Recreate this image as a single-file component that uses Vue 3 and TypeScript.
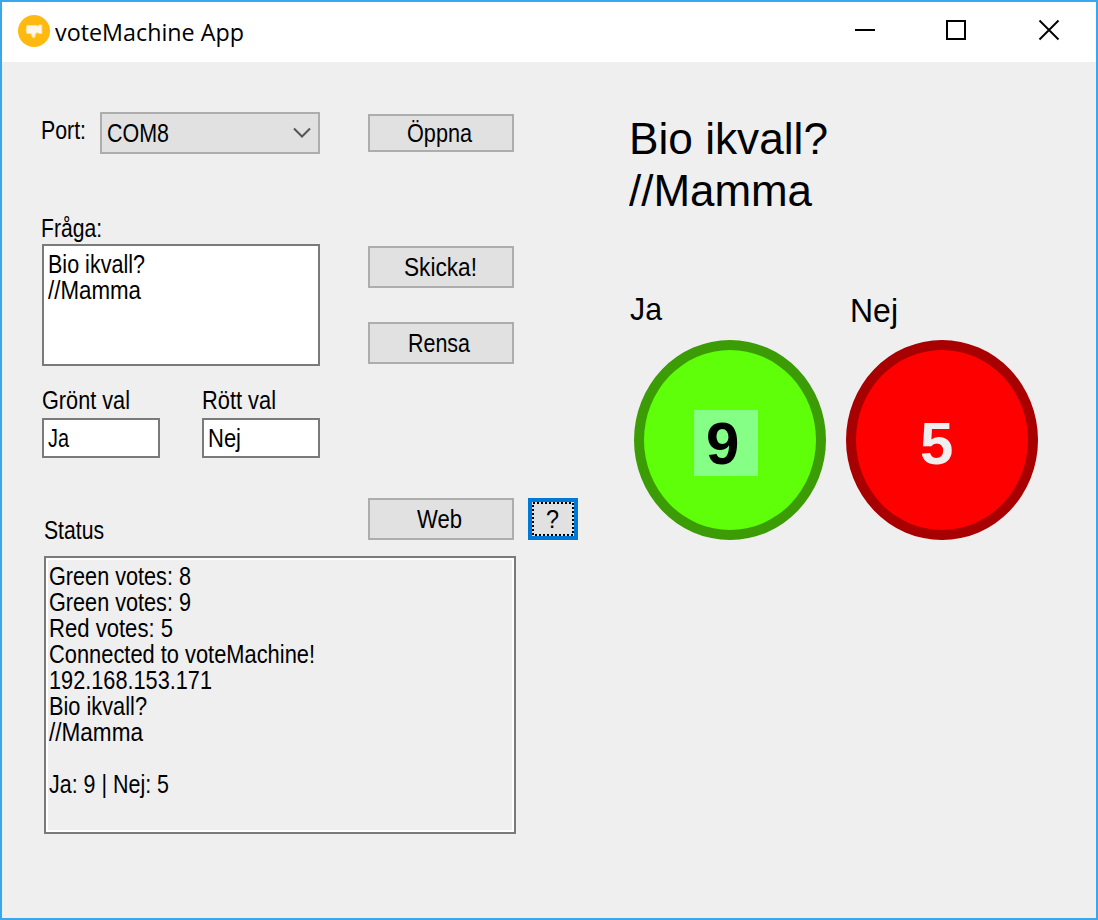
<script setup lang="ts">
interface StatusLine { text: string; width: number }

const status: StatusLine[] = [
  { text: 'Green votes: 8', width: 142 },
  { text: 'Green votes: 9', width: 142 },
  { text: 'Red votes: 5', width: 124 },
  { text: 'Connected to voteMachine!', width: 266 },
  { text: '192.168.153.171', width: 163 },
  { text: 'Bio ikvall?', width: 98 },
  { text: '//Mamma', width: 94 },
  { text: '', width: 0 },
  { text: 'Ja: 9 | Nej: 5', width: 120 },
]

// Condenses or stretches a label horizontally to a given width.
const vFit = {
  mounted(el: HTMLElement, binding: { value: number }) {
    const natural = el.getBoundingClientRect().width
    if (natural > 0) {
      el.style.transform = `scaleX(${binding.value / natural})`
      el.style.marginRight = `${binding.value - natural}px`
    }
  },
}
</script>

<template>
  <div class="window">
    <header class="titlebar">
      <svg class="app-icon" width="32" height="32" viewBox="0 0 32 32">
        <circle cx="16" cy="16" r="16" fill="#ffb90f" />
        <path d="M9 10.500h9.500l1.500 1 .8-1.500h3v8.500h-3l-.8-1-2.500.8-.8 4h-2.200l-1.500-3.800h-4l-.8-3z" fill="#fff8ea" stroke="#ffe3a6" stroke-width="1" stroke-linejoin="round" />
      </svg>
      <h1 class="app-title"><span v-fit="189" class="fit">voteMachine App</span></h1>
      <svg class="controls" width="206" height="24" viewBox="0 0 206 24" fill="none" stroke="#000" stroke-width="2">
        <path d="M1 12h20" />
        <rect x="93" y="3" width="18" height="18" />
        <path d="M185.500 2.500l19 19M204.500 2.500l-19 19" stroke-width="1.900" />
      </svg>
    </header>

    <main class="form">
      <section class="left">
        <div class="row port-row">
          <label class="port-label"><span v-fit="45" class="fit">Port:</span></label>
          <div class="combo">
            <span v-fit="62" class="fit">COM8</span>
            <svg width="18" height="12" viewBox="0 0 18 12" fill="none" stroke="#555" stroke-width="2"><path d="M1 1.500l8 8 8-8" /></svg>
          </div>
          <button class="btn short"><span v-fit="65" class="fit">Öppna</span></button>
        </div>

        <div class="row question-row">
          <div class="question">
            <label><span v-fit="61" class="fit">Fråga:</span></label>
            <div class="textarea">
              <div><span v-fit="97" class="fit">Bio ikvall?</span></div>
              <div><span v-fit="93" class="fit">//Mamma</span></div>
            </div>
          </div>
          <div class="actions">
            <button class="btn wide"><span v-fit="73" class="fit">Skicka!</span></button>
            <button class="btn"><span v-fit="62" class="fit">Rensa</span></button>
          </div>
        </div>

        <div class="row choices">
          <div class="choice">
            <label><span v-fit="88" class="fit">Grönt val</span></label>
            <div class="input"><span v-fit="21" class="fit">Ja</span></div>
          </div>
          <div class="choice">
            <label><span v-fit="74" class="fit">Rött val</span></label>
            <div class="input"><span v-fit="33" class="fit">Nej</span></div>
          </div>
        </div>

        <div class="row status-row">
          <label class="status-label"><span v-fit="60" class="fit">Status</span></label>
          <button class="btn"><span v-fit="45" class="fit">Web</span></button>
          <button class="btn help">
            <svg width="42" height="34" viewBox="0 0 42 34"><rect x="1" y="1" width="40" height="32" fill="none" stroke="#000" stroke-width="2" stroke-dasharray="2 2" shape-rendering="crispEdges" /></svg>
            <span v-fit="13" class="fit">?</span>
          </button>
        </div>

        <div class="status">
          <div v-for="(line, i) in status" :key="i" class="line"><span v-if="line.text" v-fit="line.width" class="fit">{{ line.text }}</span></div>
        </div>
      </section>

      <section class="right">
        <div class="headline">
          <div><span v-fit="199" class="fit">Bio ikvall?</span></div>
          <div><span v-fit="183" class="fit">//Mamma</span></div>
        </div>
        <div class="votes">
          <div class="vote">
            <div class="name"><span v-fit="32" class="fit">Ja</span></div>
            <div class="disc green"><span class="count">9</span></div>
          </div>
          <div class="vote">
            <div class="name nej"><span v-fit="48" class="fit">Nej</span></div>
            <div class="disc red"><span class="count">5</span></div>
          </div>
        </div>
      </section>
    </main>
  </div>
</template>

<style>
body { margin: 0; }
</style>

<style scoped>
.window {
  box-sizing: border-box;
  width: 1098px;
  height: 920px;
  border: 2px solid #3aa7ec;
  background: #efefef;
  color: #000;
  font: 25px/26px "Liberation Sans", Arial, sans-serif;
  overflow: hidden;
}
.fit { display: inline-block; white-space: pre; transform-origin: 0 50%; }
.titlebar { display: flex; height: 60px; background: #fff; }
.app-icon { margin: 13px 0 0 16px; flex: none; }
.app-title { margin: 13px 0 0 5px; font: 400 24px/34px "Open Sans", "Noto Sans", sans-serif; flex: 1; }
.controls { margin: 16px 36px 0 0; flex: none; }
.form { display: flex; }
.left { width: 588px; padding: 50px 0 0 40px; box-sizing: border-box; flex: none; }
.row { display: flex; }
label { display: block; }
.port-row { height: 42px; }
.port-label { width: 59px; margin: 5px 0 0 -1px; }
.combo {
  box-sizing: border-box; width: 220px; height: 42px; border: 2px solid #adadad;
  background: #e1e1e1; display: flex; align-items: center; justify-content: space-between;
  padding: 0 7px 0 5px;
}
.port-row .btn { margin: 2px 0 0 48px; }
.btn {
  box-sizing: border-box; width: 146px; height: 42px; padding: 0 4px 0 0; border: 2px solid #adadad;
  border-radius: 0; background: #e1e1e1; color: #000; font: inherit;
  display: flex; align-items: center; justify-content: center; flex: none;
}
.btn.short { height: 38px; }
.btn.wide { padding-right: 1px; }
.question-row { margin-top: 61px; gap: 48px; }
.question { width: 278px; }
.question label { margin-left: -1px; }
.textarea {
  box-sizing: border-box; height: 122px; margin-top: 3px; border: 2px solid #7a7a7a;
  background: #fff; padding: 5px 4px;
}
.actions { display: flex; flex-direction: column; gap: 34px; padding-top: 31px; }
.choices { gap: 42px; margin-top: 21px; }
.choice { width: 118px; }
.input {
  box-sizing: border-box; height: 40px; margin-top: 5px; border: 2px solid #7a7a7a;
  background: #fff; padding: 5px 4px;
}
.status-row { margin-top: 40px; height: 42px; }
.status-label { width: 324px; margin: 19px 0 0 2px; }
.btn.help { width: 50px; margin-left: 14px; padding: 0; border: 0; background: #0078d7; display: grid; place-items: center; }
.help svg, .help .fit { grid-area: 1 / 1; }
.help svg { background: #e1e1e1; }
.help .fit { position: relative; left: -1px; }
.status {
  box-sizing: border-box; width: 472px; height: 278px; margin: 16px 0 0 2px;
  border: 2px solid #7a7a7a; box-shadow: inset 0 0 0 2px #fff; padding: 5px 3px;
}
.line { height: 26px; }
.right { padding: 51px 0 0 39px; }
.headline { font-size: 44.5px; line-height: 52px; }
.votes { display: flex; gap: 20px; margin-top: 71px; padding-left: 5px; }
.name { height: 40px; margin: 0 0 12px -4px; font-size: 32px; line-height: 42px; }
.name.nej { margin-left: 4px; font-size: 33px; line-height: 45px; }
.disc {
  box-sizing: border-box; width: 192px; height: 200px; border: 10px solid; border-radius: 50%;
  display: flex; font-size: 60px; line-height: 68px; font-weight: 700;
}
.green { background: #5eff08; border-color: #3b9c05; }
.red { background: #f00; border-color: #a80000; color: #efefef; }
.count { width: 64px; height: 66px; box-sizing: border-box; padding-left: 12px; }
.green .count { margin: 60px 0 0 50px; background: #85ff85; }
.red .count { margin: 60px 0 0 52px; }
</style>
